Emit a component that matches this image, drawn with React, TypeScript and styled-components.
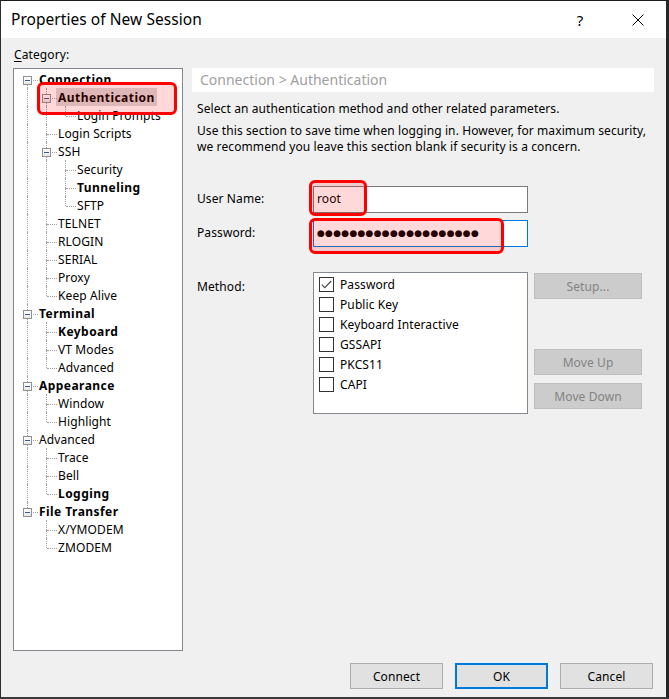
import React from 'react';
import styled, { createGlobalStyle } from 'styled-components';

const GlobalStyle = createGlobalStyle`
  html, body {
    margin: 0;
    padding: 0;
    background: #2b2b2b;
  }
  body {
    font-family: 'Segoe UI', 'Noto Sans', sans-serif;
    font-size: 12px;
    letter-spacing: 0.1px;
    color: #000;
  }
  * {
    box-sizing: border-box;
  }
`;

type TreeNode = {
  label: string;
  bold?: boolean;
  selected?: boolean;
  children?: TreeNode[];
};

const tree: TreeNode[] = [
  {
    label: 'Connection',
    bold: true,
    children: [
      {
        label: 'Authentication',
        bold: true,
        selected: true,
        children: [{ label: 'Login Prompts' }],
      },
      { label: 'Login Scripts' },
      {
        label: 'SSH',
        children: [
          { label: 'Security' },
          { label: 'Tunneling', bold: true },
          { label: 'SFTP' },
        ],
      },
      { label: 'TELNET' },
      { label: 'RLOGIN' },
      { label: 'SERIAL' },
      { label: 'Proxy' },
      { label: 'Keep Alive' },
    ],
  },
  {
    label: 'Terminal',
    bold: true,
    children: [
      { label: 'Keyboard', bold: true },
      { label: 'VT Modes' },
      { label: 'Advanced' },
    ],
  },
  {
    label: 'Appearance',
    bold: true,
    children: [{ label: 'Window' }, { label: 'Highlight' }],
  },
  {
    label: 'Advanced',
    children: [{ label: 'Trace' }, { label: 'Bell' }, { label: 'Logging', bold: true }],
  },
  {
    label: 'File Transfer',
    bold: true,
    children: [{ label: 'X/YMODEM' }, { label: 'ZMODEM' }],
  },
];

type FlatRow = {
  node: TreeNode;
  level: number;
  guides: boolean[];
  hasNext: boolean;
  isFirstRoot: boolean;
};

const flatten = (
  nodes: TreeNode[],
  level = 0,
  guides: boolean[] = [],
): FlatRow[] =>
  nodes.flatMap((node, i) => {
    const hasNext = i < nodes.length - 1;
    const row: FlatRow = {
      node,
      level,
      guides,
      hasNext,
      isFirstRoot: level === 0 && i === 0,
    };
    return [
      row,
      ...(node.children ? flatten(node.children, level + 1, [...guides, hasNext]) : []),
    ];
  });

const methods = [
  { label: 'Password', checked: true },
  { label: 'Public Key' },
  { label: 'Keyboard Interactive' },
  { label: 'GSSAPI' },
  { label: 'PKCS11' },
  { label: 'CAPI' },
];

const Window = styled.div`
  width: 669px;
  height: 699px;
  display: flex;
  flex-direction: column;
  background: #f0f0f0;
  border-top: 1px solid #1c1c1c;
  border-left: 1px solid #2e2e2e;
  border-right: 3px solid #262626;
  border-bottom: 2px solid #3a3a3a;
`;

const TitleBar = styled.div`
  height: 37px;
  flex-shrink: 0;
  display: flex;
  align-items: center;
  background: #fff;
  padding: 0 16px 0 10px;
`;

const Title = styled.div`
  flex: 1;
  font-size: 15.5px;
  letter-spacing: 0.05px;
  line-height: 20px;
  margin-top: -1px;
`;

const TitleButton = styled.div`
  width: 24px;
  height: 24px;
  display: flex;
  align-items: center;
  justify-content: center;
  font-size: 15px;
  color: #000;
  & + & {
    margin-left: 34px;
  }
`;

const Body = styled.div`
  flex: 1;
  display: flex;
  flex-direction: column;
  padding: 9px 13px 8px 12px;
`;

const CategoryLabel = styled.div`
  line-height: 16px;
  height: 16px;
  padding-left: 1px;
  u {
    text-decoration: underline;
    text-underline-offset: 2px;
  }
`;

const MainRow = styled.div`
  display: flex;
  gap: 9px;
  margin-top: 5px;
  height: 583px;
`;

const TreeBox = styled.div`
  position: relative;
  width: 170px;
  height: 100%;
  background: #fff;
  border: 1px solid #828790;
  padding-top: 1px;
`;

const TreeRow = styled.div`
  display: flex;
  height: 18px;
  padding-left: 4px;
  align-items: stretch;
`;

const GuideCell = styled.div`
  position: relative;
  width: 19px;
  flex-shrink: 0;
`;

const VLine = styled.div<{ $part: 'full' | 'top' | 'bottom' }>`
  position: absolute;
  left: 9px;
  top: ${({ $part }) => ($part === 'bottom' ? '10px' : '0')};
  height: ${({ $part }) => ($part === 'full' ? '18px' : $part === 'top' ? '10px' : '8px')};
  border-left: 1px dotted #a0a0a0;
`;

const HLine = styled.div`
  position: absolute;
  left: 10px;
  right: -1px;
  top: 10px;
  border-top: 1px dotted #a0a0a0;
`;

const Expander = styled.div`
  position: absolute;
  left: 5px;
  top: 6px;
  width: 9px;
  height: 9px;
  border: 1px solid #919191;
  background: linear-gradient(#ffffff, #e6e6e6);
  &::after {
    content: '';
    position: absolute;
    left: 1px;
    top: 3px;
    width: 5px;
    height: 1px;
    background: #3c5a9b;
  }
`;

const NodeLabel = styled.span<{ $bold?: boolean; $selected?: boolean }>`
  display: flex;
  align-items: center;
  padding: 0 2px;
  height: 18px;
  white-space: nowrap;
  font-weight: ${({ $bold }) => ($bold ? 700 : 400)};
  letter-spacing: ${({ $bold }) => ($bold ? '0.45px' : '0.1px')};
  background: ${({ $selected }) => ($selected ? '#d9d9d9' : 'transparent')};
`;

const Marker = styled.div<{ $left: number; $top: number; $w: number; $h: number }>`
  position: absolute;
  left: ${({ $left }) => $left}px;
  top: ${({ $top }) => $top}px;
  width: ${({ $w }) => $w}px;
  height: ${({ $h }) => $h}px;
  border: 3px solid #ff0000;
  border-radius: 6px;
  background: rgba(255, 0, 0, 0.15);
  pointer-events: none;
`;

const Panel = styled.div`
  flex: 1;
  display: flex;
  flex-direction: column;
`;

const PanelHeader = styled.div`
  height: 24px;
  background: #fff;
  display: flex;
  align-items: center;
  padding: 0 0 1px 8px;
  font-size: 14px;
  letter-spacing: 0;
  color: #a0a0a0;
  margin-right: -1px;
`;

const PanelContent = styled.div`
  padding-left: 5px;
  display: flex;
  flex-direction: column;
`;

const Paragraph = styled.p<{ $gap: number }>`
  margin: ${({ $gap }) => $gap}px 0 0;
  line-height: 16px;
  letter-spacing: 0.1px;
`;

const FieldRow = styled.div<{ $gap: number }>`
  display: flex;
  align-items: center;
  margin-top: ${({ $gap }) => $gap}px;
`;

const FieldLabel = styled.div`
  width: 116px;
  flex-shrink: 0;
  line-height: 16px;
  margin-top: -1px;
`;

const InputWrap = styled.div`
  position: relative;
`;

const TextBox = styled.div<{ $focused?: boolean }>`
  width: 215px;
  height: 27px;
  background: #fff;
  border: 1px solid ${({ $focused }) => ($focused ? '#0078d7' : '#7a7a7a')};
  padding: 0 3px 2px;
  display: flex;
  align-items: center;
  line-height: 16px;
`;

const PasswordDots = styled.span`
  font-family: 'DejaVu Sans', sans-serif;
  font-size: 9px;
  letter-spacing: 0.25px;
  margin-top: 1px;
`;

const MethodRow = styled.div`
  display: flex;
  align-items: flex-start;
  margin-top: 25px;
`;

const MethodLabel = styled(FieldLabel)`
  margin-top: 0;
  padding-top: 7px;
`;

const ListBox = styled.div`
  width: 215px;
  height: 142px;
  background: #fff;
  border: 1px solid #828790;
  padding: 1px 0 0 5px;
`;

const CheckRow = styled.div`
  display: flex;
  align-items: center;
  gap: 6px;
  height: 20px;
`;

const CheckBox = styled.div`
  width: 15px;
  height: 15px;
  border: 1px solid #333;
  background: #fff;
  display: flex;
  align-items: center;
  justify-content: center;
`;

const SideButtons = styled.div`
  display: flex;
  flex-direction: column;
  margin-left: 6px;
  padding-top: 1px;
`;

const DisabledButton = styled.div<{ $gap?: number }>`
  width: 108px;
  height: 26px;
  margin-top: ${({ $gap }) => $gap ?? 0}px;
  background: #cccccc;
  border: 1px solid #bfbfbf;
  color: #838383;
  display: flex;
  align-items: center;
  justify-content: center;
`;

const Footer = styled.div`
  display: flex;
  justify-content: flex-end;
  gap: 12px;
  margin-top: 12px;
`;

const DialogButton = styled.div<{ $default?: boolean }>`
  width: 93px;
  height: 26px;
  background: #e1e1e1;
  border: ${({ $default }) => ($default ? '2px solid #0078d7' : '1px solid #adadad')};
  display: flex;
  align-items: center;
  justify-content: center;
`;

const CloseIcon = () => (
  <svg width="12" height="12" viewBox="0 0 12 12">
    <path d="M0.5 0.5 L11.5 11.5 M11.5 0.5 L0.5 11.5" stroke="#000" strokeWidth="1" fill="none" />
  </svg>
);

const CheckIcon = () => (
  <svg width="11" height="9" viewBox="0 0 11 9">
    <path d="M0.8 4.6 L3.8 7.6 L10.2 1" stroke="#444" strokeWidth="1.1" fill="none" />
  </svg>
);

const Tree = () => {
  const rows = flatten(tree);
  return (
    <TreeBox>
      {rows.map((row, i) => (
        <TreeRow key={i}>
          {row.guides.map((on, d) => (
            <GuideCell key={d}>{on && <VLine $part="full" />}</GuideCell>
          ))}
          <GuideCell>
            {!row.isFirstRoot && <VLine $part="top" />}
            {row.hasNext && <VLine $part="bottom" />}
            <HLine />
            {row.node.children && <Expander />}
          </GuideCell>
          <NodeLabel $bold={row.node.bold} $selected={row.node.selected}>
            {row.node.label}
          </NodeLabel>
        </TreeRow>
      ))}
      <Marker $left={23} $top={13} $w={140} $h={33} />
    </TreeBox>
  );
};

export default function App() {
  return (
    <>
      <GlobalStyle />
      <Window>
        <TitleBar>
          <Title>Properties of New Session</Title>
          <TitleButton>?</TitleButton>
          <TitleButton>
            <CloseIcon />
          </TitleButton>
        </TitleBar>
        <Body>
          <CategoryLabel>
            <u>C</u>ategory:
          </CategoryLabel>
          <MainRow>
            <Tree />
            <Panel>
              <PanelHeader>Connection &gt; Authentication</PanelHeader>
              <PanelContent>
                <Paragraph $gap={9}>
                  Select an authentication method and other related parameters.
                </Paragraph>
                <Paragraph $gap={6}>
                  Use this section to save time when logging in. However, for maximum security,
                  <br />
                  we recommend you leave this section blank if security is a concern.
                </Paragraph>
                <FieldRow $gap={31}>
                  <FieldLabel>User Name:</FieldLabel>
                  <InputWrap>
                    <TextBox>root</TextBox>
                    <Marker $left={-4} $top={-6} $w={58} $h={36} />
                  </InputWrap>
                </FieldRow>
                <FieldRow $gap={7}>
                  <FieldLabel>Password:</FieldLabel>
                  <InputWrap>
                    <TextBox $focused>
                      <PasswordDots>{'●'.repeat(20)}</PasswordDots>
                    </TextBox>
                    <Marker $left={-4} $top={-2} $w={195} $h={36} />
                  </InputWrap>
                </FieldRow>
                <MethodRow>
                  <MethodLabel>Method:</MethodLabel>
                  <ListBox>
                    {methods.map((m) => (
                      <CheckRow key={m.label}>
                        <CheckBox>{m.checked && <CheckIcon />}</CheckBox>
                        {m.label}
                      </CheckRow>
                    ))}
                  </ListBox>
                  <SideButtons>
                    <DisabledButton>Setup...</DisabledButton>
                    <DisabledButton $gap={50}>Move Up</DisabledButton>
                    <DisabledButton $gap={8}>Move Down</DisabledButton>
                  </SideButtons>
                </MethodRow>
              </PanelContent>
            </Panel>
          </MainRow>
          <Footer>
            <DialogButton>Connect</DialogButton>
            <DialogButton $default>OK</DialogButton>
            <DialogButton>Cancel</DialogButton>
          </Footer>
        </Body>
      </Window>
    </>
  );
}
